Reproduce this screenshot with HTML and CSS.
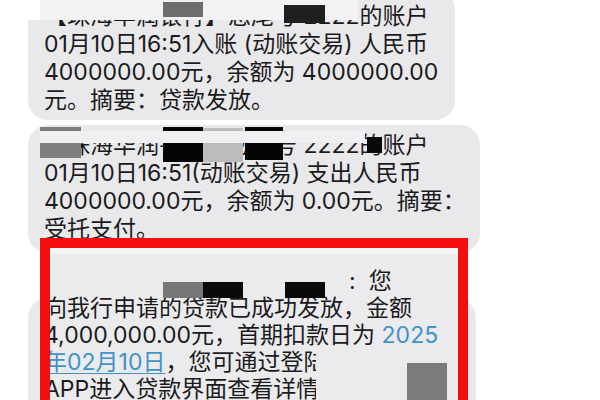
FILE: index.html
```html
<!DOCTYPE html>
<html lang="zh-CN">
<head>
<meta charset="utf-8">
<title>短信</title>
<link rel="stylesheet" href="styles.css">
</head>
<body>
<div class="thread">
  <div class="bubble b1">
    <div class="ln">【珠海华润银行】您尾号 2222的账户</div>
    <div class="ln">01月10日16:51入账 (动账交易) 人民币</div>
    <div class="ln">4000000.00元，余额为 4000000.00</div>
    <div class="ln">元。摘要：贷款发放。</div>
    <div class="mask m1"></div>
    <div class="redact r1a"></div>
    <div class="redact r1b"></div>
  </div>
  <div class="bubble b2">
    <div class="ln">【珠海华润银行】您尾号 2222的账户</div>
    <div class="ln">01月10日16:51(动账交易) 支出人民币</div>
    <div class="ln">4000000.00元，余额为 0.00元。摘要：</div>
    <div class="ln">受托支付。</div>
    <div class="redact r2a"></div>
    <div class="redact r2b"></div>
    <div class="redact r2c"></div>
    <div class="redact r2d"></div>
    <div class="redact r2e"></div>
    <div class="mask m2"></div>
  </div>
  <div class="b3">
    <div class="hl">
      <div class="txt">
        <div class="ln3"><span class="colon">:</span><span class="nin">您</span></div>
        <div class="ln3">向我行申请的贷款已成功发放，金额</div>
        <div class="ln3">4,000,000.00元，首期扣款日为 <span class="link">2025</span></div>
        <div class="ln3"><span class="link u">年02月10日</span>，您可通过登陆手机银行</div>
        <div class="ln3">APP进入贷款界面查看详情。</div>
      </div>
      <div class="redact r3a"></div>
      <div class="redact r3b"></div>
      <div class="redact r3c"></div>
      <div class="cover"></div>
      <div class="redact r3d"></div>
    </div>
  </div>
</div>
</body>
</html>
```
FILE: styles.css
```css
html, body {
  margin: 0;
  padding: 0;
}
body {
  width: 600px;
  height: 400px;
  overflow: hidden;
  background: #ffffff;
  font-family: "Inter", "Noto Sans CJK SC", sans-serif;
  font-size: 23px;
  color: #1b1b1d;
}
.thread {
  padding-left: 28px;
}
.bubble {
  position: relative;
  box-sizing: border-box;
  background: #e9e9eb;
  border-radius: 20px;
  padding-left: 16px;
  line-height: 28px;
  white-space: nowrap;
}
.b1 {
  width: 427px;
  margin-top: -10px;
  padding-top: 12px;
  padding-bottom: 6px;
}
.b2 {
  width: 452px;
  margin-top: 5px;
  padding-top: 6px;
  padding-bottom: 10px;
}
.mask, .redact, .cover {
  position: absolute;
}
.m1 {
  left: 0;
  top: 0;
  width: 330px;
  height: 30px;
  background: linear-gradient(90deg, #ffffff 12px, #f2f2f4 12px);
}
.r1a { left: 135px; top: 12px; width: 40px; height: 15px; background: #6d6d6d; }
.r1b { left: 256px; top: 15px; width: 41px; height: 18px; background: #1f1f1f; }

.r2a { left: 12px; top: 2px; width: 41px; height: 31px; background: #7d7d7d; }
.r2b { left: 135px; top: 2px; width: 40px; height: 35px; background: #050505; }
.r2c { left: 175px; top: 3px; width: 40px; height: 34px; background: #bcbcbc; }
.r2d { left: 217px; top: 2px; width: 38px; height: 33px; background: #050505; }
.r2e { left: 339px; top: 12px; width: 15px; height: 16px; background: #0a0a0a; }
.m2 {
  left: 12px;
  top: 6px;
  width: 325px;
  height: 12px;
  background: #f0f0f2;
}

.b3 {
  position: relative;
  margin-top: -15px;
}
.b3::before {
  content: "";
  position: absolute;
  left: 0;
  top: 60px;
  width: 448px;
  height: 200px;
  background: #e9e9eb;
  border-radius: 20px;
}
.hl {
  position: relative;
  box-sizing: border-box;
  margin-left: 12px;
  width: 428px;
  height: 190px;
  border: 10px solid #f50d0f;
  background: linear-gradient(#f4f4f5 0 6px, #ebebed 6px);
  overflow: hidden;
  padding-top: 20px;
}
.txt {
  margin-left: -6px;
  white-space: nowrap;
  line-height: 27px;
}
.colon { margin-left: 305px; }
.nin { margin-left: 13px; }
.link { color: #3f93c9; }
.u {
  text-decoration: underline;
  text-decoration-thickness: 1px;
  text-underline-offset: 3px;
}
.r3a { left: 113px; top: 34px; width: 40px; height: 16px; background: #777777; }
.r3b { left: 153px; top: 34px; width: 40px; height: 16px; background: #0a0a0a; }
.r3c { left: 235px; top: 34px; width: 40px; height: 16px; background: #0a0a0a; }
.cover { left: 266px; top: 102px; width: 142px; height: 70px; background: #ebebed; }
.r3d { left: 357px; top: 115px; width: 40px; height: 50px; background: #7b7b7b; }
```
